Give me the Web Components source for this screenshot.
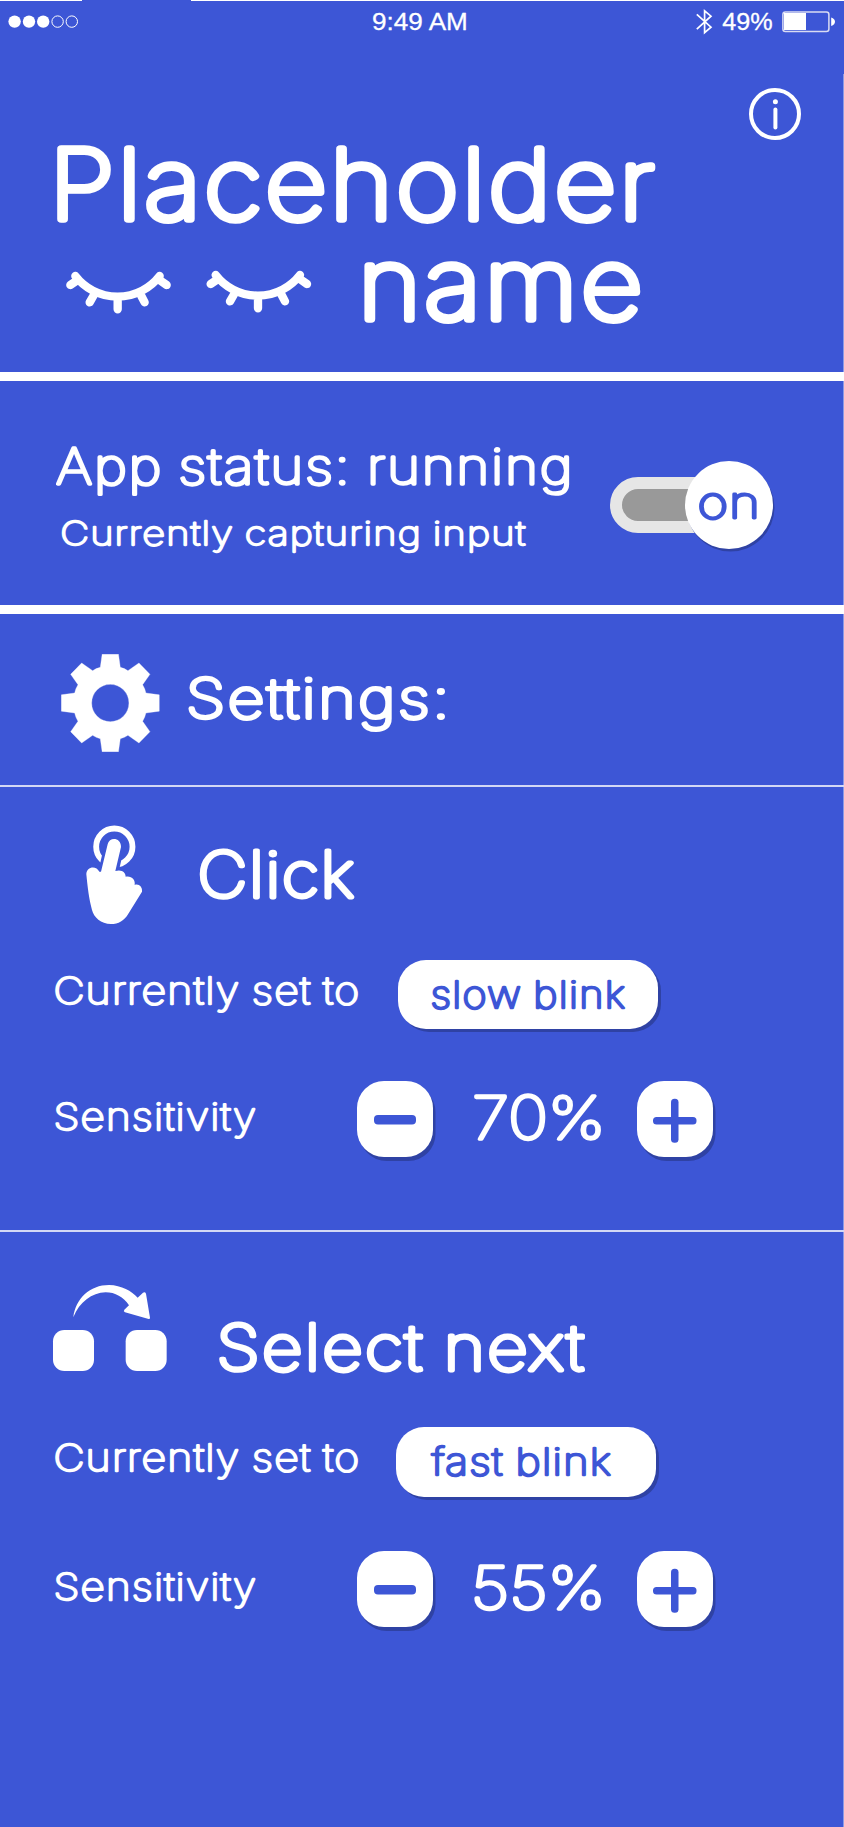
<!DOCTYPE html>
<html lang="en">
<head>
<meta charset="utf-8">
<title>Blink control</title>
<style>
  body { margin: 0; background: #3d56d6; color: #fff; font-family: Inter, sans-serif; }
</style>
</head>
<body>
<blink-app></blink-app>
<script>
const make = (name, html, setup) => customElements.define(name, class extends HTMLElement {
  connectedCallback() {
    if (this.shadowRoot) return;
    const root = this.attachShadow({ mode: 'open' });
    const t = document.createElement('template');
    t.innerHTML = html;
    root.append(t.content.cloneNode(true));
    if (setup) setup.call(this, root);
  }
});

/* Rounded lettering: thin glyphs with a round-joined outline, sized by ink width (w), cap height (cap) and stroke (s).
   Letters are spaced out by part of the stroke width so that the outline does not close the gaps. */
const ctx = document.createElement('canvas').getContext('2d');
make('round-text', `<style>
  :host { display: block; flex: none; }
  svg { display: block; overflow: visible; }
  text { fill: currentColor; stroke: currentColor; stroke-linejoin: round; }
</style><svg><text></text></svg>`, function (root) {
  const num = (a, d) => this.hasAttribute(a) ? +this.getAttribute(a) : d;
  const w = num('w'), cap = num('cap'), s = num('s', 0);
  const plain = this.hasAttribute('plain');
  const family = plain ? 'Liberation Sans' : 'Inter', weight = plain ? 400 : 100;
  const size = (cap - s) / (plain ? 0.716 : 0.727);
  const label = this.textContent.trim();
  const gap = plain ? 0 : s * num('spread', 0.4);
  const nudge = plain ? 0 : 0.6;
  const word = plain ? 0 : size * -0.04;
  ctx.font = `${weight} ${size}px "${family}"`;
  const m = ctx.measureText(label);
  const ink = m.actualBoundingBoxLeft + m.actualBoundingBoxRight + gap * (label.length - 1) + word * (label.split(' ').length - 1);
  const sx = (w + nudge - s) / ink;
  const svg = root.querySelector('svg'), text = root.querySelector('text');
  svg.setAttribute('width', w);
  svg.setAttribute('height', cap);
  text.textContent = label;
  text.style.font = `${weight} ${size}px "${family}", sans-serif`;
  text.style.letterSpacing = gap + 'px';
  text.style.wordSpacing = word + 'px';
  text.style.strokeWidth = s;
  text.style.vectorEffect = 'non-scaling-stroke';
  text.setAttribute('transform', `translate(${s / 2 + m.actualBoundingBoxLeft * sx - nudge} ${cap - s / 2}) scale(${sx} 1)`);
});

make('status-bar', `<style>
  :host { display: flex; align-items: flex-start; height: 60px; }
  svg { display: block; flex: none; }
</style>
<svg width="82" height="44" fill="#fff"><rect width="82" height="1"/>
  <circle cx="14.6" cy="21.6" r="6.2"/><circle cx="29" cy="21.6" r="6.2"/><circle cx="43.2" cy="21.6" r="6.2"/>
  <g fill="none" stroke="#fff" stroke-width="1"><circle cx="57.6" cy="21.6" r="5.7"/><circle cx="71.8" cy="21.6" r="5.7"/></g></svg>
<round-text plain w="95" cap="17.8" s="0.3" style="margin:12px 0 0 291px">9:49 AM</round-text>
<svg width="20" height="44" style="margin-left:227px" fill="none" stroke="#fff" stroke-width="1.7"><path d="M1.8 14.3 16 27.2 9.6 32.6V10.8L16 16.2 1.8 29.2"/></svg>
<round-text plain w="50" cap="17.8" s="0.3" style="margin:12.3px 0 0 7px">49%</round-text>
<svg width="54" height="44" style="margin-left:10px"><rect x=".9" y="12" width="46" height="19.4" rx="2.5" fill="none" stroke="#d9dbf2" stroke-width="1.5"/><rect x="2" y="13" width="22" height="17" fill="#fff"/><path d="M49.2 17.5Q53 19 53 21.7T49.2 26Z" fill="#fff"/></svg>`);

make('info-icon', `<style>:host{display:block;flex:none}svg{display:block}</style>
<svg width="52" height="52" viewBox="0 0 52 52"><circle cx="26" cy="26" r="24" fill="none" stroke="#fff" stroke-width="4"/><circle cx="26.4" cy="13.7" r="2.5" fill="#fff"/><path d="M26.4 21.4v18.2" stroke="#fff" stroke-width="4" stroke-linecap="round"/></svg>`);

const eye = `<path d="M46 48A160 160 0 0 0 299 48M31 75 52 61M89 127 100 108M173 148V110M254 127 244 108M320 75 297 59"/>`;
make('eyes-icon', `<style>:host{display:block;flex:none}svg{display:block}</style>
<svg width="260" height="60" viewBox="0 0 780 180" fill="none" stroke="#fff" stroke-width="25" stroke-linecap="round">${eye}<g transform="translate(421 -3)">${eye}</g></svg>`);

make('gear-icon', `<style>:host{display:block;flex:none}svg{display:block}</style>
<svg width="98.6" height="98" viewBox="-148 -147 296 294"><path fill="#fff" fill-rule="evenodd" stroke="#fff" stroke-width="1" stroke-linejoin="round" d="M-24.5-146.500H24.500L30-107Q43-104 53-97L86-120 119-86 97-55Q104-44 107-30L147-24.500V24.500L107 30Q104 44 97 55L119 86 86 120 53 97Q43 104 30 107L24.500 146.500H-24.500L-30 107Q-43 104-53 97L-86 120-119 86-97 55Q-104 44-107 30L-147 24.500V-24.500L-107-30Q-104-44-97-55L-119-86-86-120-53-97Q-43-104-30-107ZM56 0A56 56 0 1 0-56 0A56 56 0 1 0 56 0Z"/></svg>`);

const finger = 'M98 88C103 65 138 67 138 96L121 172 76 186Z';
make('tap-icon', `<style>:host{display:block;flex:none}svg{display:block}</style>
<svg width="80" height="120" viewBox="0 0 240 360"><circle cx="118" cy="95" r="54.500" fill="none" stroke="#fff" stroke-width="17.500"/>
<path d="${finger}" fill="#3d56d6" stroke="#3d56d6" stroke-width="19"/>
<path fill="#fff" d="M98 88C103 65 138 67 138 96L121 168C140 162 152 172 152 185C170 182 182 194 179 210C191 205 203 216 201 230L160 296C148 317 130 327 108 327C78 327 56 306 51 285C42 250 38 220 34 178C34 154 64 150 73 170L78 170Z"/></svg>`);

make('jump-icon', `<style>:host{display:block;flex:none}svg{display:block}</style>
<svg width="130" height="110" viewBox="0 0 390 330" fill="#fff"><path d="M85 127C92 70 135 30 192 30C230 31 260 48 278 68L294 53Q300 49 303 56L315 128Q315 133 311 132L240 112Q234 109 238 104L252 91C236 66 210 52 182 52C140 54 104 80 85 127Z"/><rect x="24" y="165" width="123" height="123" rx="34"/><rect x="242" y="165" width="123" height="123" rx="34"/></svg>`);

make('toggle-switch', `<style>
  :host { display: flex; flex: none; width: 162px; height: 88px; align-items: center; }
  .track { box-sizing: border-box; flex: none; width: 120px; height: 56px; border: 12px solid #e6e6e6; border-radius: 28px; background: #999; }
  .knob { flex: none; width: 88px; height: 88px; margin-left: -45.500px; border-radius: 50%; background: #fff; color: #3d56d6; box-shadow: 1.5px 2.500px 0 #2f42a4; }
  ::slotted(*) { margin: 24.500px 0 0 14.500px; }
</style><div class="track"></div><div class="knob"><slot></slot></div>`);

make('pill-button', `<style>
  :host { display: block; flex: none; box-sizing: border-box; width: 260px; height: 69.500px; padding: 19.200px 0 0 34px; border-radius: 28px; background: #fff; color: #3d56d6; box-shadow: 3px 3px 0 #2f42a4; }
</style><slot></slot>`);

make('step-button', `<style>
  :host { display: block; flex: none; width: 76px; height: 76px; border-radius: 27px; background: #fff; box-shadow: 2.500px 4px 0 #2f42a4; }
  svg { display: block; }
</style><svg width="76" height="76" fill="#3d56d6"></svg>`, function (root) {
  root.querySelector('svg').innerHTML = this.getAttribute('kind') === 'plus'
    ? '<rect x="16" y="36" width="43.500" height="7.500" rx="3.500"/><rect x="34" y="17.700" width="7.500" height="44" rx="3.500"/>'
    : '<rect x="17" y="34" width="42" height="9.400" rx="4"/>';
});

make('app-panel', `<style>:host { display: block; box-sizing: border-box; }</style><slot></slot>`);
make('app-row', `<style>:host { display: flex; align-items: flex-start; }</style><slot></slot>`);

make('blink-app', `<style>
  :host { display: block; width: 844px; height: 1827px; overflow: hidden; background:
    linear-gradient(#fff, #fff) 191px 0 / 653px 1px no-repeat,
    linear-gradient(#8b9ae6, #8b9ae6) 843px 74px / 1px 1753px no-repeat, #3d56d6; }
  .head { height: 372px; }
  .state { height: 242px; border: solid #fff; border-width: 9px 0; }
  .state app-row { padding: 66px 0 0 55.500px; }
  .settings { height: 173px; border-bottom: 2px solid #d3d8f5; }
  .click { height: 445px; border-bottom: 2px solid #d3d8f5; }
</style>
<app-panel class="head">
  <status-bar></status-bar>
  <app-row>
    <round-text w="598.500" cap="78" s="7.900" style="margin:85px 0 0 57px">Placeholder</round-text>
    <info-icon style="margin:28.300px 0 0 93.500px"></info-icon>
  </app-row>
  <app-row style="margin-top:23px">
    <eyes-icon style="margin:14px 0 0 60px"></eyes-icon>
    <round-text w="275.500" cap="78" s="7.900" style="margin:-.6px 0 0 45px">name</round-text>
  </app-row>
</app-panel>
<app-panel class="state">
  <app-row>
    <div>
      <round-text w="513.500" cap="39" s="3.600">App status: running</round-text>
      <round-text w="464.500" cap="26.500" s="2.500" style="margin:33.500px 0 0 6px">Currently capturing input</round-text>
    </div>
    <toggle-switch style="margin:13.500px 0 0 41.300px"><round-text w="58.500" cap="35" s="3.300" spread=".2">on</round-text></toggle-switch>
  </app-row>
</app-panel>
<app-panel class="settings">
  <app-row>
    <gear-icon style="margin:40px 0 0 61.200px"></gear-icon>
    <round-text w="256" cap="44" s="4.500" spread=".5" style="margin:62px 0 0 29.400px">Settings:</round-text>
  </app-row>
</app-panel>
<app-panel class="click">
  <app-row>
    <tap-icon style="margin:28px 0 0 75px"></tap-icon>
    <round-text w="155" cap="50.500" s="5.100" spread=".3" style="margin:62.300px 0 0 44.700px">Click</round-text>
  </app-row>
  <app-row style="margin-top:24.700px">
    <round-text w="304" cap="29.500" s="2.600" style="margin:16.600px 0 0 55.300px">Currently set to</round-text>
    <pill-button style="margin-left:38.500px"><round-text w="193" cap="30" s="2.900">slow blink</round-text></pill-button>
  </app-row>
  <app-row style="margin-top:52px">
    <round-text w="201" cap="29.500" s="2.600" style="margin:21.300px 0 0 55.300px">Sensitivity</round-text>
    <step-button kind="minus" style="margin-left:100.400px"></step-button>
    <round-text w="127.500" cap="47" s="3.900" spread="0" style="margin:13.300px 0 0 41.800px">70%</round-text>
    <step-button kind="plus" style="margin-left:34.900px"></step-button>
  </app-row>
</app-panel>
<app-panel class="next">
  <app-row>
    <jump-icon style="margin:43px 0 0 45px"></jump-icon>
    <round-text w="366" cap="50.500" s="5.100" style="margin:89.500px 0 0 43.500px">Select next</round-text>
  </app-row>
  <app-row style="margin-top:42px">
    <round-text w="304" cap="29.500" s="2.600" style="margin:15.500px 0 0 55.300px">Currently set to</round-text>
    <pill-button style="margin-left:37px"><round-text w="180" cap="30" s="2.900" style="margin-left:1px">fast blink</round-text></pill-button>
  </app-row>
  <app-row style="margin-top:54.500px">
    <round-text w="201" cap="29.500" s="2.600" style="margin:20.500px 0 0 55.300px">Sensitivity</round-text>
    <step-button kind="minus" style="margin-left:100.400px"></step-button>
    <round-text w="127.500" cap="47" s="3.900" spread="0" style="margin:13px 0 0 41.800px">55%</round-text>
    <step-button kind="plus" style="margin-left:34.900px"></step-button>
  </app-row>
</app-panel>`);
</script>
</body>
</html>
